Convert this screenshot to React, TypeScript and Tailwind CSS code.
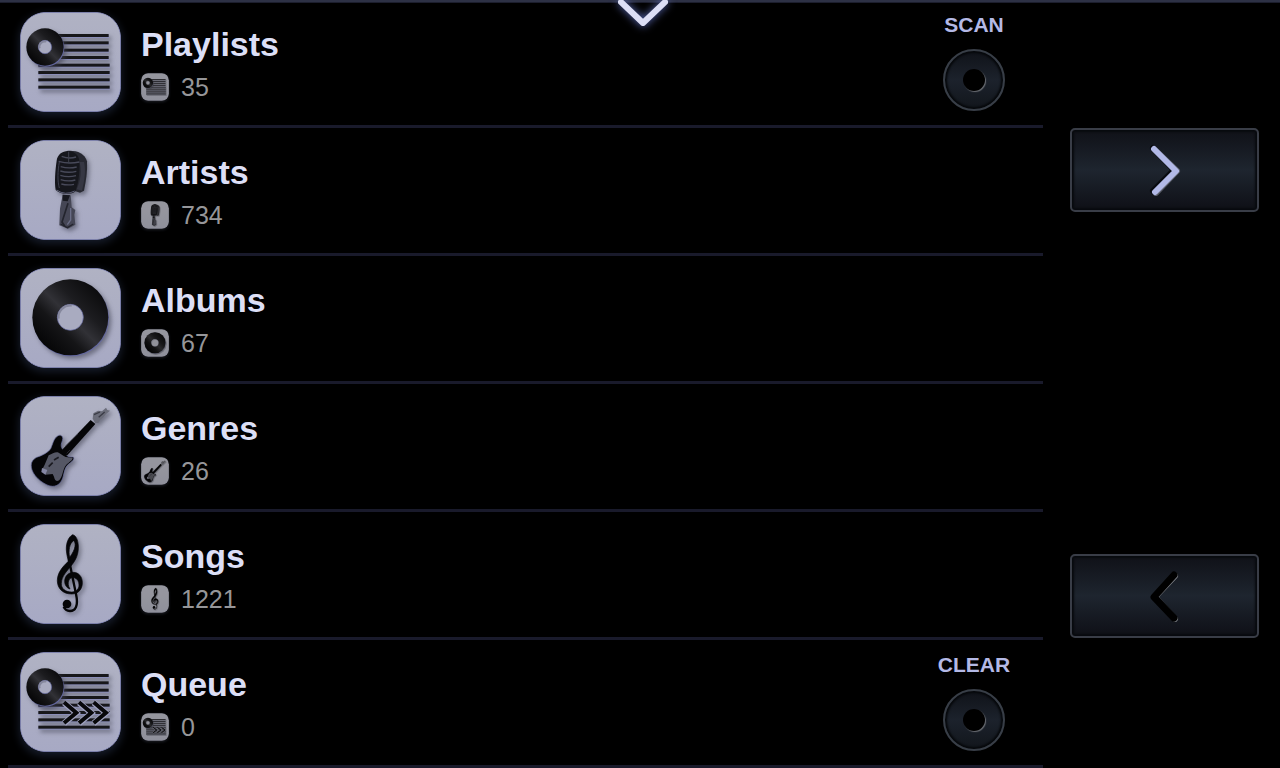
import React, { useId } from 'react';

type IconKind = 'playlists' | 'artists' | 'albums' | 'genres' | 'songs' | 'queue';

interface Category {
  kind: IconKind;
  title: string;
  count: number;
  action?: string;
}

const CATEGORIES: Category[] = [
  { kind: 'playlists', title: 'Playlists', count: 35, action: 'SCAN' },
  { kind: 'artists', title: 'Artists', count: 734 },
  { kind: 'albums', title: 'Albums', count: 67 },
  { kind: 'genres', title: 'Genres', count: 26 },
  { kind: 'songs', title: 'Songs', count: 1221 },
  { kind: 'queue', title: 'Queue', count: 0, action: 'CLEAR' },
];

const LINE_ROWS = [70, 92, 114, 136, 159, 181, 203, 225];

interface DiscProps {
  cx: number;
  cy: number;
  r: number;
  hole: number;
  fill: string;
}

const Disc: React.FC<DiscProps> = ({ cx, cy, r, hole, fill }) => (
  <>
    <circle cx={cx + 2} cy={cy + 3} r={r} fill="#6468a0" />
    <circle cx={cx} cy={cy} r={r} fill={fill} />
    <circle cx={cx} cy={cy} r={hole} fill="#a9abc0" stroke="#6468a0" strokeWidth="2" />
    <path
      d={`M${cx - hole + 4} ${cy + 4} A${hole - 4} ${hole - 4} 0 0 1 ${cx + 4} ${cy - hole + 4}`}
      fill="none"
      stroke="#85879c"
      strokeWidth="6"
    />
  </>
);

const Microphone = () => (
  <>
    {/* Back shell */}
    <path d="M140 33 C166 30 194 38 201 64 C203 92 198 124 192 152 L180 158 L156 150 Z" fill="#272831" />
    <path d="M178 66 C186 90 182 122 170 148 L186 152 C194 120 198 92 192 66 Z" fill="#363743" />
    {/* Grille */}
    <path d="M110 62 C112 42 130 31 148 33 C166 35 178 48 178 66 C180 100 174 136 166 154 C154 166 122 164 107 150 C103 124 106 90 110 62 Z" fill="#16171d" />
    <g fill="none" stroke="#484a5a" strokeWidth="4">
      <path d="M125 49 Q148 58 168 51" />
      <path d="M116 64 Q146 73 178 66" />
      <path d="M122 80 Q146 87 170 81" />
      <path d="M121 93 Q145 100 169 94" />
      <path d="M121 106 Q144 113 168 107" />
      <path d="M122 119 Q144 126 166 120" />
      <path d="M124 132 Q143 137 162 133" />
    </g>
    <g fill="none" stroke="#3e404d" strokeWidth="3">
      <path d="M118 66 C113 94 112 122 118 144" />
      <path d="M146 35 V70" />
    </g>
    <path d="M110 150 Q136 168 164 153" fill="none" stroke="#5e6078" strokeWidth="3" />
    {/* Stand */}
    <path d="M128 164 L152 166 L155 202 L166 210 L163 224 L166 254 L144 266 L118 256 L120 206 Z" fill="#454655" />
    <path d="M128 164 L150 166 L143 184 L128 182 Z" fill="#17181f" />
    <path d="M144 190 L126 246 L134 258" fill="none" stroke="#23242d" strokeWidth="5" />
    <path d="M152 204 V240 L142 254" fill="none" stroke="#6a6d86" strokeWidth="4" />
    <path d="M122 252 L142 263 L160 252" fill="none" stroke="#23242d" strokeWidth="4" />
  </>
);

const Guitar = () => (
  <>
    <path d="M127 122 C131 128 125 138 124 144 C122 154 128 162 136 170 L142 180 C150 186 156 181 161 184 C164 194 150 200 142 208 C134 218 133 228 130 240 C126 258 114 271 98 271 C78 271 44 246 36 222 C30 202 36 192 50 184 C66 178 82 172 92 158 C98 146 100 130 110 122 C116 116 123 116 127 122 Z" fill="#050507" stroke="#6e72a4" strokeWidth="2" />
    <path d="M86 178 C98 174 106 166 116 170 C126 176 134 184 144 184 C150 186 156 184 158 187 C156 196 144 200 138 208 C128 220 130 236 120 250 C114 258 104 256 102 242 L98 234 L76 236 L66 222 L74 206 Z" fill="#555765" />
    <path d="M66 216 L82 222 L76 236 L64 228 Z" fill="#8587a4" />
    <path d="M102 192 L116 184 M86 212 L98 200" stroke="#1a1a20" strokeWidth="5" />
    <path d="M122 166 L212 72 L226 84 L142 178 L130 176 Z" fill="#050507" />
    <path d="M218 68 L220 52 L234 44 L246 46 L258 35 L262 42 L270 44 L258 54 L250 64 L240 72 L236 80 L226 82 Z" fill="#6b6d7a" />
    <path d="M236 64 L254 48 M222 56 L240 48" stroke="#3a3b46" strokeWidth="4" />
    <path d="M136 150 L174 114 M140 172 L150 162" stroke="#34343e" strokeWidth="2" />
  </>
);

const TrebleClef = () => (
  <>
    <path
      fillRule="evenodd"
      fill="#050507"
      stroke="#050507"
      strokeWidth="2"
      d="M158 32 C146 38 138 56 139 78 C140 92 143 102 145 112 C128 128 112 146 112 170 C112 194 130 210 155 210 C175 210 187 196 187 176 C187 158 176 145 160 145 C145 145 134 157 134 172 C134 184 141 193 150 195 C144 186 143 176 147 168 C150 162 156 160 162 161 C172 163 177 172 177 183 C177 196 168 204 154 204 C136 204 123 194 124 178 C125 156 140 142 153 126 C168 108 176 90 175 66 C174 48 168 34 158 32 Z M161 50 C169 56 167 76 149 100 C145 80 148 58 161 50 Z"
    />
    <path d="M147 108 L168 210 C176 246 166 261 150 261 C140 261 134 256 131 248" fill="none" stroke="#050507" strokeWidth="7" />
    <circle cx="141" cy="240" r="13" fill="#050507" />
  </>
);

interface TileProps {
  kind: IconKind;
  className: string;
}

const Tile: React.FC<TileProps> = ({ kind, className }) => {
  const id = useId();
  const face = `${id}face`;
  const vinyl = `${id}vinyl`;
  const shade = `${id}shade`;
  const hasLines = kind === 'playlists' || kind === 'queue';

  return (
    <svg viewBox="0 0 303 300" className={className} aria-hidden="true">
      <defs>
        <linearGradient id={face} x1="0" y1="0" x2="0" y2="1">
          <stop offset="0" stopColor="#b0b2c3" />
          <stop offset="1" stopColor="#a7a9c4" />
        </linearGradient>
        <linearGradient id={vinyl} x1="0.15" y1="0.85" x2="0.85" y2="0.15">
          <stop offset="0" stopColor="#060607" />
          <stop offset="0.3" stopColor="#151517" />
          <stop offset="0.5" stopColor="#313136" />
          <stop offset="0.7" stopColor="#1c1c1f" />
          <stop offset="1" stopColor="#0c0c0e" />
        </linearGradient>
        <filter id={shade} x="-20%" y="-20%" width="150%" height="150%" colorInterpolationFilters="sRGB">
          <feDropShadow dx="7" dy="8" stdDeviation="7" floodColor="#3c3e4c" floodOpacity="0.55" />
        </filter>
      </defs>
      <rect x="1" y="1" width="301" height="298" rx="75" fill={`url(#${face})`} stroke="#7c80b0" strokeWidth="3" />
      <g filter={`url(#${shade})`}>
        {hasLines &&
          LINE_ROWS.map((y, i) => (
            <g key={y}>
              <rect x="55" y={y - 1} width={i < 4 ? 212 : 215} height="9" fill="#8a8db8" />
              <rect x="55" y={y - 4} width={i < 4 ? 211 : 214} height="9" fill="#17171a" />
            </g>
          ))}
        {kind === 'albums' && <Disc cx={151} cy={148} r={114} hole={39} fill={`url(#${vinyl})`} />}
        {kind === 'artists' && <Microphone />}
        {kind === 'genres' && <Guitar />}
        {kind === 'songs' && <TrebleClef />}
      </g>
      {kind === 'queue' &&
        [132, 177, 221].map((x) => (
          <g key={x} fill="none">
            <path d={`M${x} 152 L${x + 37} 183 L${x} 214`} stroke="#a0a2c0" strokeWidth="18" />
            <path d={`M${x} 151 L${x + 37} 182 L${x} 213`} stroke="#08080a" strokeWidth="12" />
          </g>
        ))}
      {hasLines && (
        <g filter={`url(#${shade})`}>
          <Disc cx={75} cy={105} r={56} hole={20} fill={`url(#${vinyl})`} />
        </g>
      )}
    </svg>
  );
};

const RoundAction: React.FC<{ label: string }> = ({ label }) => (
  <button type="button" className="flex w-[138px] shrink-0 flex-col items-center pt-[13px]">
    <span className="text-[21px] leading-6 font-bold text-[#b4b9e6]">{label}</span>
    <span className="mt-3 flex size-[62px] items-center justify-center rounded-full border-2 border-[#383e47] bg-linear-to-b from-[#101319] via-[#1c222c] to-[#12161c] shadow-[inset_0_0_2px_2px_#06080b]">
      <span className="size-[22px] rounded-full bg-black shadow-[1px_1px_1px_#6a6d73]" />
    </span>
  </button>
);

const CategoryRow: React.FC<{ category: Category }> = ({ category }) => {
  const { kind, title, count, action } = category;

  return (
    <li className="flex h-32 border-b-3 border-[#191a2b]">
      <button type="button" className="flex flex-1 items-start pt-3 pl-3 text-left">
        <Tile kind={kind} className="h-[100px] w-[101px] rounded-[25px] shadow-[0_3px_8px_1px_#161c2a]" />
        <span className="ml-5 flex flex-col pt-3">
          <span className="text-[34px] leading-10 font-bold text-[#dcdff6]">{title}</span>
          <span className="mt-[9px] flex items-center gap-3">
            <Tile kind={kind} className="size-7 rounded-[7px] opacity-85 shadow-[0_1px_3px_#1d2333] saturate-50" />
            <span className="text-[25px] leading-7 text-[#969699]">{count}</span>
          </span>
        </span>
      </button>
      {action && <RoundAction label={action} />}
    </li>
  );
};

const PageButton: React.FC<{ direction: 'next' | 'previous' }> = ({ direction }) => {
  const isNext = direction === 'next';

  return (
    <button
      type="button"
      aria-label={isNext ? 'Next' : 'Previous'}
      className="flex h-[84px] w-full items-center justify-center rounded-[5px] border-2 border-[#393d47] bg-linear-to-b from-[#11131a] from-5% via-[#1e252f] to-[#101219] to-95% shadow-[inset_0_0_2px_2px_#080a0e]"
    >
      <svg viewBox="0 0 32 52" className="h-[52px] w-8" fill="none" strokeLinecap="round" strokeLinejoin="round" strokeWidth="6">
        {isNext ? (
          <>
            <path d="M6 6 L28 27 L7 49" stroke="#5a5e6a" />
            <path d="M4 4 L25 26 L4 47" stroke="#080a0f" />
            <path d="M5 5 L27 27 L6 48" stroke="#b2b9e7" />
          </>
        ) : (
          <>
            <path d="M26 6 L6 27 L26 49" stroke="#7c7f85" />
            <path d="M25 5 L5 27 L25 48" stroke="#000000" strokeWidth="7" />
          </>
        )}
      </svg>
    </button>
  );
};

export default function App() {
  return (
    <div className="relative flex min-h-screen overflow-hidden bg-black font-['Liberation_Sans',Arial,sans-serif]">
      {/* Pull-down handle */}
      <header className="absolute inset-x-0 top-0 flex h-[3px] justify-center border-b border-[#1c1e2d] bg-[#2d3145]">
        <button type="button" aria-label="Open player" className="absolute top-0 ml-1 h-10 w-20">
          <svg viewBox="0 0 80 40" className="h-10 w-20 drop-shadow-[0_0_4px_#6070c0]" fill="none">
            <path d="M19 2 L41 23 L63 2" stroke="#dcdef5" strokeWidth="6" strokeLinecap="round" strokeLinejoin="round" />
          </svg>
        </button>
      </header>

      <main className="flex-1 pl-2">
        <ul>
          {CATEGORIES.map((category) => (
            <CategoryRow key={category.kind} category={category} />
          ))}
        </ul>
      </main>

      <nav className="flex w-[237px] shrink-0 flex-col justify-between pt-32 pr-[21px] pb-[130px] pl-[27px]">
        <PageButton direction="next" />
        <PageButton direction="previous" />
      </nav>
    </div>
  );
}
